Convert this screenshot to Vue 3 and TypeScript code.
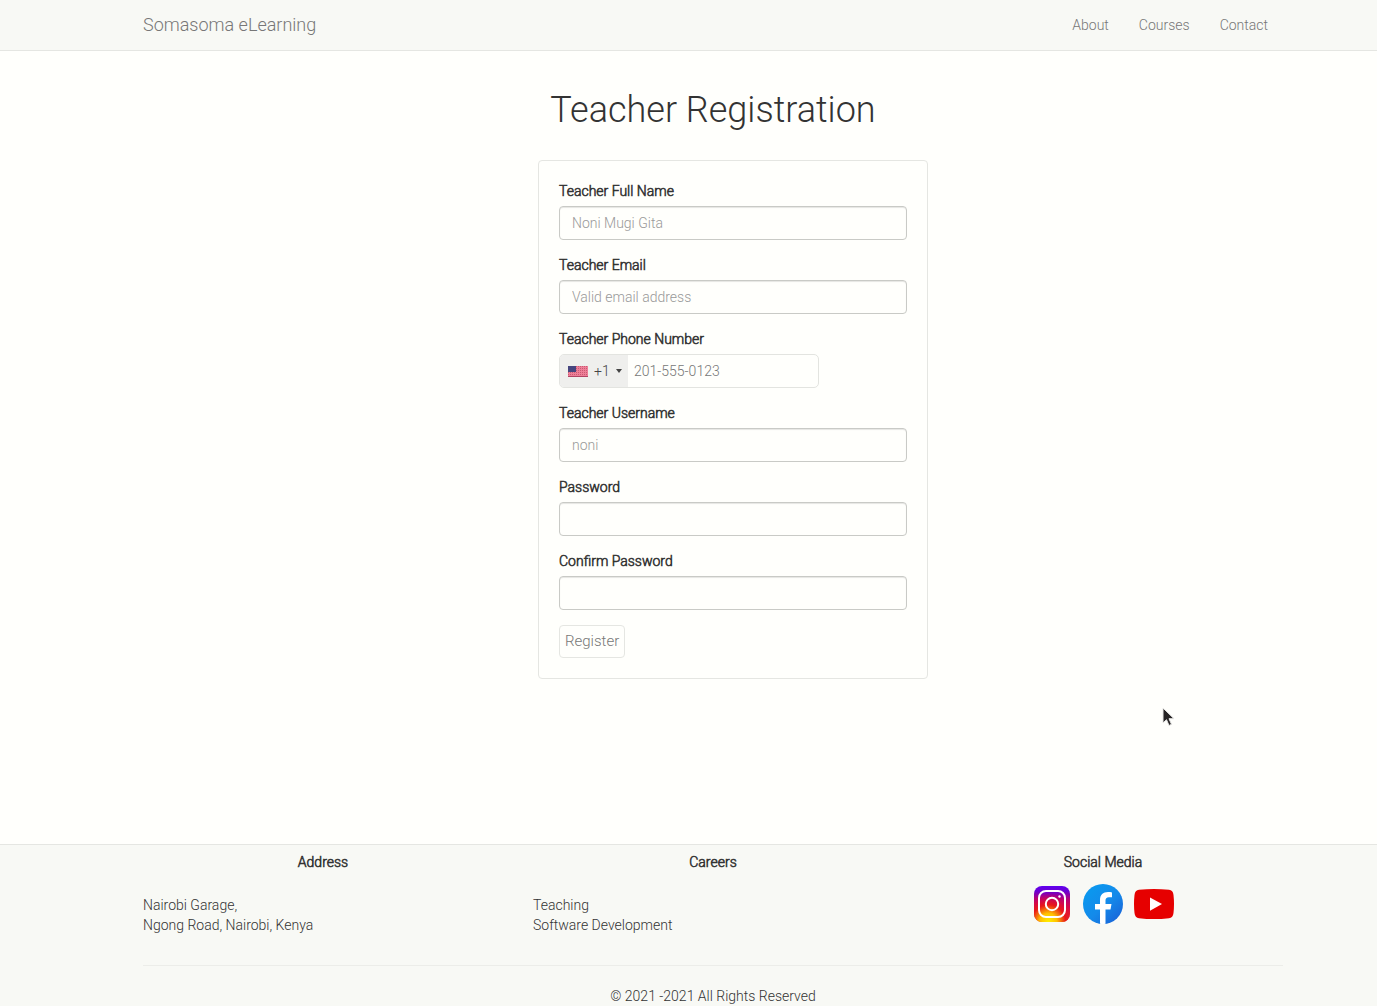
<script setup lang="ts">
import { ref } from 'vue'

interface Field {
  id: string
  label: string
  type: string
  placeholder: string
}

const navLinks: string[] = ['About', 'Courses', 'Contact']

const fields: Field[] = [
  { id: 'full-name', label: 'Teacher Full Name', type: 'text', placeholder: 'Noni Mugi Gita' },
  { id: 'email', label: 'Teacher Email', type: 'email', placeholder: 'Valid email address' },
  { id: 'phone', label: 'Teacher Phone Number', type: 'tel', placeholder: '201-555-0123' },
  { id: 'username', label: 'Teacher Username', type: 'text', placeholder: 'noni' },
  { id: 'password', label: 'Password', type: 'password', placeholder: '' },
  { id: 'confirm', label: 'Confirm Password', type: 'password', placeholder: '' },
]

const values = ref<Record<string, string>>({})
</script>

<template>
  <div class="page">
    <header class="navbar">
      <div class="container navbar-inner">
        <a class="brand" href="#">Somasoma eLearning</a>
        <nav class="nav">
          <a v-for="link in navLinks" :key="link" href="#">{{ link }}</a>
        </nav>
      </div>
    </header>

    <main class="main">
      <div class="container">
        <h1>Teacher Registration</h1>
        <div class="card-row">
          <form class="card" @submit.prevent>
            <div v-for="f in fields" :key="f.id" class="group">
              <label :for="f.id">{{ f.label }}</label>
              <div v-if="f.type === 'tel'" class="phone">
                <button type="button" class="dial" aria-label="Country code">
                  <svg class="flag" width="20" height="11" viewBox="0 0 20 11" shape-rendering="crispEdges">
                    <rect width="20" height="11" fill="#ee7f98" />
                    <path d="M0 0.5H20M0 2.5H20M0 4.5H20M0 6.5H20M0 8.5H20M0 10.5H20" stroke="#c95a72" stroke-dasharray="1 1" />
                    <path d="M0 10.5H20" stroke="#b04464" />
                    <rect width="8" height="6" fill="#46467f" />
                  </svg>
                  <span>+1</span>
                  <span class="caret"></span>
                </button>
                <input :id="f.id" v-model="values[f.id]" type="tel" :placeholder="f.placeholder" />
              </div>
              <input v-else :id="f.id" v-model="values[f.id]" class="control" :type="f.type" :placeholder="f.placeholder" />
            </div>
            <button class="register" type="submit">Register</button>
          </form>
        </div>
      </div>
      <svg class="pointer" width="14" height="21" viewBox="0 0 14 21" aria-hidden="true">
        <path d="M1 1V16L4.500 12.700L7 18.500L9.500 17.300L7 11.700H12Z" fill="#262324" stroke="#e8e8e6" stroke-width="1" />
      </svg>
    </main>

    <footer class="footer">
      <div class="container">
        <div class="columns">
          <section>
            <h2>Address</h2>
            <p>Nairobi Garage,<br />Ngong Road, Nairobi, Kenya</p>
          </section>
          <section>
            <h2>Careers</h2>
            <p>Teaching<br />Software Development</p>
          </section>
          <section>
            <h2>Social Media</h2>
            <div class="social">
              <a href="#" aria-label="Instagram">
                <svg width="40" height="40" viewBox="0 0 40 40">
                  <defs>
                    <linearGradient id="ig-top" x1="0.500" y1="0" x2="0.500" y2="1">
                      <stop offset="0" stop-color="#6000f0" />
                      <stop offset="0.150" stop-color="#6c00d0" />
                      <stop offset="0.350" stop-color="#b0007c" />
                      <stop offset="0.600" stop-color="#d4084c" />
                      <stop offset="1" stop-color="#f04c20" />
                    </linearGradient>
                    <radialGradient id="ig-glow" cx="0.400" cy="1" r="0.800">
                      <stop offset="0" stop-color="#fff000" />
                      <stop offset="0.300" stop-color="#ffc000" />
                      <stop offset="0.600" stop-color="#e81818" />
                      <stop offset="1" stop-color="#d80050" stop-opacity="0" />
                    </radialGradient>
                  </defs>
                  <rect x="2" y="2" width="36" height="36" rx="8" fill="url(#ig-top)" />
                  <rect x="2" y="2" width="36" height="36" rx="8" fill="url(#ig-glow)" />
                  <rect x="7" y="7" width="26" height="26" rx="7" fill="none" stroke="#fff" stroke-width="2" />
                  <circle cx="20" cy="20" r="6.200" fill="none" stroke="#fff" stroke-width="2" />
                  <circle cx="27.500" cy="12.500" r="1.200" fill="#fff" />
                </svg>
              </a>
              <a href="#" aria-label="Facebook">
                <svg width="40" height="40" viewBox="0 0 40 40">
                  <defs>
                    <linearGradient id="fb" x1="0.200" y1="0.200" x2="0.850" y2="0.900">
                      <stop offset="0" stop-color="#0c96ee" />
                      <stop offset="0.500" stop-color="#148aea" />
                      <stop offset="1" stop-color="#1868da" />
                    </linearGradient>
                  </defs>
                  <circle cx="20" cy="20" r="20" fill="url(#fb)" />
                  <path d="M17 39.800V25.500H12V20H17V16C17 10.700 20 8 25 8C26.600 8 28 8.200 29 8.400V13.200H26C23.400 13.200 22.500 14.700 22.500 16.500V20H28.500L27.500 25.500H22.500V39.800Q20 40.200 17 39.800Z" fill="#fff" />
                </svg>
              </a>
              <a href="#" aria-label="YouTube">
                <svg width="40" height="40" viewBox="0 0 40 40">
                  <path d="M5 5.800Q20 4 35 5.800Q39 6.200 39.500 11Q40.500 20 39.500 29Q39 33.800 35 34.200Q20 36 5 34.200Q1 33.800 0.500 29Q-0.500 20 0.500 11Q1 6.200 5 5.800Z" fill="#e60000" />
                  <path d="M16 13.500L28 20L16 26.800Z" fill="#fff" />
                </svg>
              </a>
            </div>
          </section>
        </div>
        <div class="copyright">© 2021 -2021 All Rights Reserved</div>
      </div>
    </footer>
  </div>
</template>

<style>
body {
  margin: 0;
  background: #fffffc;
}
</style>

<style scoped>
* {
  box-sizing: border-box;
}
.page {
  display: flex;
  flex-direction: column;
  min-height: 100vh;
  font: 300 14px/20px Roboto, "Liberation Sans", sans-serif;
  color: #333;
}
a {
  color: inherit;
  text-decoration: none;
}
.navbar,
.main,
.footer {
  padding-left: 49px;
}
.container {
  max-width: 1170px;
  margin: 0 auto;
  padding: 0 15px;
}
.navbar {
  background: #f8f9f5;
  border-bottom: 1px solid #e5e6e2;
  color: #777;
}
.navbar-inner {
  display: flex;
  justify-content: space-between;
  align-items: center;
  height: 50px;
}
.brand {
  font-size: 18px;
}
.nav {
  display: flex;
  gap: 30px;
  padding-right: 15px;
}
.main {
  position: relative;
  flex: 1;
}
h1 {
  margin: 39px 0 30px;
  font-size: 36px;
  line-height: 40px;
  font-weight: 300;
  text-align: center;
}
.card-row {
  display: flex;
  justify-content: center;
  padding-left: 40px;
}
.card {
  width: 390px;
  padding: 20px;
  border: 1px solid #e5e6e2;
  border-radius: 4px;
}
.group {
  margin-bottom: 15px;
}
/* Headings and labels thicken the light face instead of switching to a wider one. */
label,
h2 {
  font-weight: 300;
  -webkit-text-stroke: 0.04em currentColor;
}
label {
  display: block;
  margin-bottom: 5px;
}
input,
button {
  font: inherit;
}
input::placeholder {
  color: #999;
  opacity: 1;
}
.control {
  display: block;
  width: 100%;
  height: 34px;
  padding: 6px 12px;
  border: 1px solid #c9cac6;
  border-radius: 4px;
  background: transparent;
  box-shadow: inset 0 1px 1px #0000001a;
}
.phone {
  display: flex;
  width: 260px;
  height: 34px;
  overflow: hidden;
  border: 1px solid #e3e4e0;
  border-radius: 5px;
}
.phone input {
  flex: 1;
  min-width: 0;
  padding: 0 6px;
  border: 0;
  background: transparent;
}
.phone input::placeholder {
  color: #777;
}
.dial {
  display: flex;
  align-items: center;
  gap: 6px;
  width: 68px;
  padding: 0 0 0 8px;
  border: 0;
  background: #efefed;
  color: #444;
}
.caret {
  border: 3px solid transparent;
  border-top: 4px solid #444;
  border-bottom: 0;
}
.register {
  display: block;
  height: 33px;
  padding: 0 5px 2px;
  border: 1px solid #e5e6e2;
  border-radius: 4px;
  background: transparent;
  color: #777;
  font-size: 15px;
}
.pointer {
  position: absolute;
  left: 1162px;
  top: 656px;
}
.footer {
  background: #f8f9f5;
  border-top: 1px solid #e5e6e2;
}
.columns {
  display: grid;
  grid-template-columns: repeat(3, 1fr);
  gap: 30px;
  padding: 7px 0 30px;
  border-bottom: 1px solid #ecede9;
}
h2 {
  margin: 0;
  font-size: 14px;
  line-height: 20px;
  text-align: center;
}
p {
  margin: 23px 0 0;
}
.social {
  display: flex;
  justify-content: center;
  gap: 11px;
  padding-top: 12px;
}
.social svg {
  display: block;
}
.copyright {
  padding-top: 20px;
  text-align: center;
}
</style>
